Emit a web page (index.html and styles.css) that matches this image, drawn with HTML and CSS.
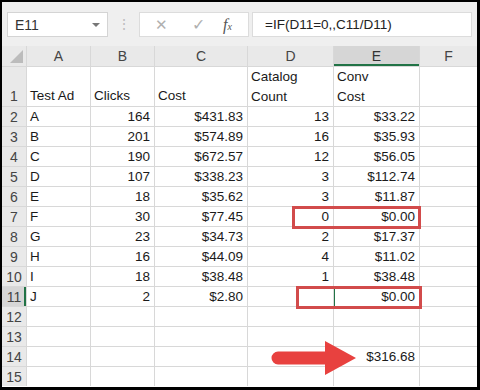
FILE: index.html
```html
<!DOCTYPE html>
<html>
<head>
<meta charset="utf-8">
<link rel="stylesheet" href="styles.css">
</head>
<body>
<div class="frame">
  <div class="toolbar">
    <div class="namebox"><span>E11</span><span class="dd"></span></div>
    <div class="sep">⋮</div>
    <div class="fxbox">
      <span class="ic x">✕</span>
      <span class="ic ck">✓</span>
      <span class="ic fx">f<sub>x</sub></span>
    </div>
    <div class="formula">=IF(D11=0,,C11/D11)</div>
  </div>
  <div class="sheet">
    <div class="ch corner"><span class="tri"></span></div>
    <div class="ch">A</div><div class="ch">B</div><div class="ch">C</div><div class="ch">D</div><div class="ch sel">E</div><div class="ch">F</div>

    <div class="rh tall">1</div>
    <div class="c tall">Test Ad</div><div class="c tall">Clicks</div><div class="c tall">Cost</div><div class="c tall two">Catalog<br>Count</div><div class="c tall two">Conv<br>Cost</div><div class="c tall"></div>

    <div class="rh">2</div><div class="c">A</div><div class="c r">164</div><div class="c r">$431.83</div><div class="c r">13</div><div class="c r">$33.22</div><div class="c"></div>
    <div class="rh">3</div><div class="c">B</div><div class="c r">201</div><div class="c r">$574.89</div><div class="c r">16</div><div class="c r">$35.93</div><div class="c"></div>
    <div class="rh">4</div><div class="c">C</div><div class="c r">190</div><div class="c r">$672.57</div><div class="c r">12</div><div class="c r">$56.05</div><div class="c"></div>
    <div class="rh">5</div><div class="c">D</div><div class="c r">107</div><div class="c r">$338.23</div><div class="c r">3</div><div class="c r">$112.74</div><div class="c"></div>
    <div class="rh">6</div><div class="c">E</div><div class="c r">18</div><div class="c r">$35.62</div><div class="c r">3</div><div class="c r">$11.87</div><div class="c"></div>
    <div class="rh">7</div><div class="c">F</div><div class="c r">30</div><div class="c r">$77.45</div><div class="c r">0</div><div class="c r">$0.00</div><div class="c"></div>
    <div class="rh">8</div><div class="c">G</div><div class="c r">23</div><div class="c r">$34.73</div><div class="c r">2</div><div class="c r">$17.37</div><div class="c"></div>
    <div class="rh">9</div><div class="c">H</div><div class="c r">16</div><div class="c r">$44.09</div><div class="c r">4</div><div class="c r">$11.02</div><div class="c"></div>
    <div class="rh">10</div><div class="c">I</div><div class="c r">18</div><div class="c r">$38.48</div><div class="c r">1</div><div class="c r">$38.48</div><div class="c"></div>
    <div class="rh selrow">11</div><div class="c">J</div><div class="c r">2</div><div class="c r">$2.80</div><div class="c r"></div><div class="c r active">$0.00</div><div class="c"></div>
    <div class="rh">12</div><div class="c"></div><div class="c"></div><div class="c"></div><div class="c"></div><div class="c"></div><div class="c"></div>
    <div class="rh">13</div><div class="c"></div><div class="c"></div><div class="c"></div><div class="c"></div><div class="c"></div><div class="c"></div>
    <div class="rh">14</div><div class="c"></div><div class="c"></div><div class="c"></div><div class="c"></div><div class="c r">$316.68</div><div class="c"></div>
    <div class="rh">15</div><div class="c"></div><div class="c"></div><div class="c"></div><div class="c"></div><div class="c"></div><div class="c"></div>
  </div>
</div>
<div class="hl hl1"></div>
<div class="hl hl2"></div>
<svg class="arrow" width="90" height="40" viewBox="0 0 90 40">
  <path d="M8 11.5 H55 V1 L86 18 L55 35 V24.5 H8 A6.5 6.5 0 0 1 8 11.5 Z" fill="#e8413f"/>
</svg>
</body>
</html>
```
FILE: styles.css
```css
html, body {
  margin: 0;
  padding: 0;
  background: #000;
}
body {
  position: relative;
  width: 480px;
  height: 390px;
  overflow: hidden;
  font-family: "Liberation Sans", Arial, sans-serif;
  font-size: 13.5px;
  color: #1a1a1a;
}
.frame {
  box-sizing: border-box;
  width: 480px;
  height: 390px;
  border-style: solid;
  border-color: #000;
  border-width: 2px 3px 3px 2px;
  background: #fff;
  overflow: hidden;
}
.toolbar {
  height: 44px;
  background: #efefef;
  display: flex;
  align-items: flex-start;
  padding-top: 10px;
  box-sizing: border-box;
}
.namebox {
  margin-left: 5px;
  width: 101px;
  height: 25px;
  box-sizing: border-box;
  background: #fff;
  border: 1px solid #d4d4d4;
  display: flex;
  align-items: center;
  justify-content: space-between;
  padding: 0 7px 0 7px;
  color: #333;
  font-size: 14px;
}
.dd {
  width: 0;
  height: 0;
  border-left: 4px solid transparent;
  border-right: 4px solid transparent;
  border-top: 4px solid #777;
  margin-top: 1px;
}
.sep {
  width: 31px;
  text-align: center;
  color: #bdbdbd;
  font-size: 14px;
  line-height: 25px;
}
.fxbox {
  width: 110px;
  height: 25px;
  box-sizing: border-box;
  background: #fff;
  border: 1px solid #dcdcdc;
  position: relative;
}
.ic {
  position: absolute;
  top: 0;
  line-height: 23px;
  color: #b0b0b0;
}
.x { left: 15px; font-size: 15px; }
.ck { left: 52px; font-size: 16px; }
.fx {
  left: 83px;
  color: #555;
  font-family: "Liberation Serif", serif;
  font-style: italic;
  font-size: 16px;
}
.fx sub { font-size: 10px; vertical-align: 0; }
.formula {
  margin-left: 3px;
  width: 220px;
  height: 25px;
  box-sizing: border-box;
  background: #fff;
  border: 1px solid #dcdcdc;
  line-height: 23px;
  padding-left: 12px;
  color: #222;
  font-size: 13.5px;
}
.sheet {
  display: grid;
  grid-template-columns: 24px 63px 63px 92px 85px 85px 57px;
  grid-template-rows: 20px 39px repeat(14, 19px);
  gap: 1px;
  background: #d8d8d8;
}
.ch {
  background: #e9e9e9;
  color: #444;
  text-align: center;
  line-height: 21px;
  font-size: 14px;
  position: relative;
}
.ch.sel {
  background: #d6d6d6;
  box-shadow: inset 0 -2px 0 #217346;
  color: #333;
}
.tri {
  position: absolute;
  right: 3px;
  bottom: 3px;
  width: 0;
  height: 0;
  border-left: 13px solid transparent;
  border-bottom: 13px solid #bcbcbc;
}
.rh {
  background: #e9e9e9;
  color: #444;
  text-align: center;
  line-height: 20px;
  font-size: 14px;
}
.rh.tall {
  display: flex;
  align-items: flex-end;
  justify-content: center;
}
.rh.selrow {
  background: #d6d6d6;
  box-shadow: inset -2px 0 0 #217346;
}
.c {
  background: #fff;
  line-height: 20px;
  padding: 0 4px 0 3px;
  white-space: nowrap;
}
.c.tall {
  display: flex;
  align-items: flex-end;
  line-height: 20px;
}
.c.two { display: block; }
.c.r { text-align: right; }
.c.active { box-shadow: inset 1px 0 0 #217346; }
.hl {
  position: absolute;
  box-sizing: border-box;
  border: 3px solid #d24b4b;
}
.hl1 { left: 292px; top: 206px; width: 129px; height: 23px; }
.hl2 { left: 296px; top: 286px; width: 126px; height: 23px; }
.arrow {
  position: absolute;
  left: 270px;
  top: 340px;
}
```
